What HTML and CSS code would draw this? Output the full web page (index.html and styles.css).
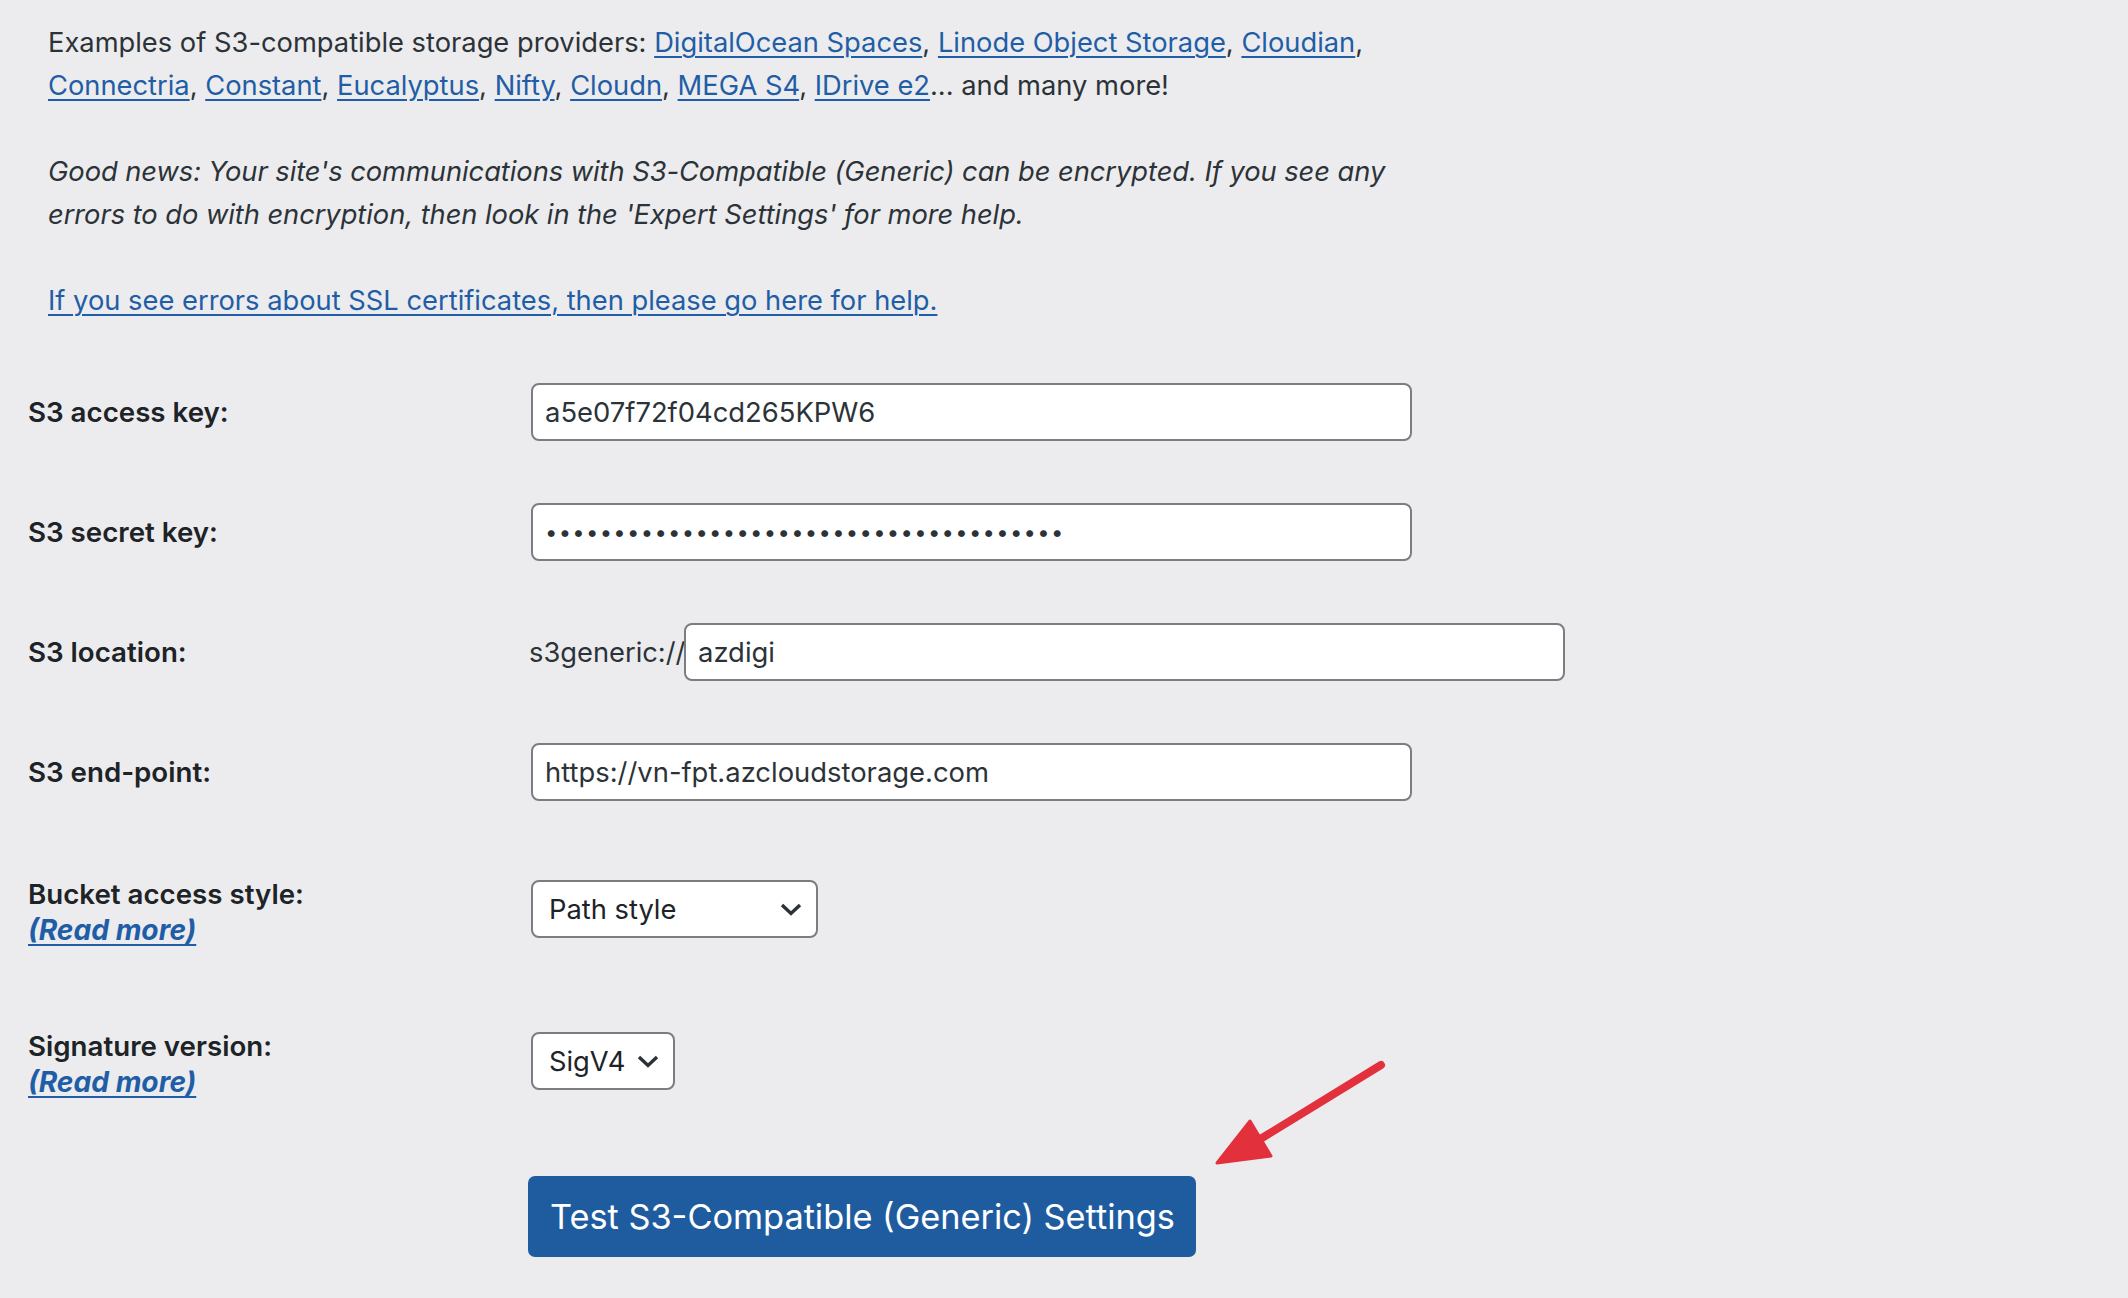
FILE: index.html
```html
<!DOCTYPE html>
<html>
<head>
  <title>S3-Compatible (Generic) settings</title>
  <link rel="stylesheet" href="styles.css">
</head>
<body>
  <div class="intro">
    <p>Examples of S3-compatible storage providers: <a href="#">DigitalOcean Spaces</a>, <a href="#">Linode Object Storage</a>, <a href="#">Cloudian</a>, <a href="#">Connectria</a>, <a href="#">Constant</a>, <a href="#">Eucalyptus</a>, <a href="#">Nifty</a>, <a href="#">Cloudn</a>, <a href="#">MEGA S4</a>, <a href="#">IDrive e2</a>... and many more!</p>
    <p><em>Good news: Your site's communications with S3-Compatible (Generic) can be encrypted. If you see any errors to do with encryption, then look in the 'Expert Settings' for more help.</em></p>
    <p><a href="#">If you see errors about SSL certificates, then please go here for help.</a></p>
  </div>

  <div class="form">
    <div class="row">
      <label class="label">S3 access key:</label>
      <div class="field"><input class="text" type="text" value="a5e07f72f04cd265KPW6"></div>
    </div>
    <div class="row">
      <label class="label">S3 secret key:</label>
      <div class="field"><input class="text secret" type="text" value="••••••••••••••••••••••••••••••••••••••"></div>
    </div>
    <div class="row">
      <label class="label">S3 location:</label>
      <div class="field"><span class="prefix">s3generic://</span><input class="text" type="text" value="azdigi"></div>
    </div>
    <div class="row">
      <label class="label">S3 end-point:</label>
      <div class="field"><input class="text" type="text" value="https://vn-fpt.azcloudstorage.com"></div>
    </div>
    <div class="row tall">
      <div class="label">Bucket access style:<br><a class="more" href="#">(Read more)</a></div>
      <div class="field">
        <div class="select path">
          <span>Path style</span>
          <svg width="22" height="13" viewBox="0 0 22 13"><path d="M2 2 L11 10.5 L20 2" fill="none" stroke="#2c3338" stroke-width="3.4"/></svg>
        </div>
      </div>
    </div>
    <div class="row tall">
      <div class="label">Signature version:<br><a class="more" href="#">(Read more)</a></div>
      <div class="field">
        <div class="select">
          <span>SigV4</span>
          <svg width="22" height="13" viewBox="0 0 22 13"><path d="M2 2 L11 10.5 L20 2" fill="none" stroke="#2c3338" stroke-width="3.4"/></svg>
        </div>
      </div>
    </div>
    <div class="row last">
      <div></div>
      <div class="field"><button class="test-btn">Test S3-Compatible (Generic) Settings</button></div>
    </div>
  </div>

  <svg class="arrow" width="200" height="130" viewBox="0 0 200 130">
    <line x1="181" y1="15" x2="62" y2="88" stroke="#e2303c" stroke-width="8" stroke-linecap="round"/>
    <polygon points="17,113 50,71 71,106" fill="#e2303c" stroke="#e2303c" stroke-width="3" stroke-linejoin="round"/>
  </svg>
</body>
</html>
```

FILE: styles.css
```css
body { margin: 0; background-color: #ececee; font-family: Inter, "Liberation Sans", sans-serif; font-size: 27.3px; color: #2c3338; position: relative; min-height: 1298px; }
a { color: #1f5ea6; text-decoration: underline; text-decoration-thickness: 2px; text-underline-offset: 4px; }

.intro { padding: 21px 0 0 48px; width: 1390px; }
.intro p { margin: 0 0 43px; line-height: 43px; }
.intro p:last-child { margin-bottom: 0; }
.intro em { letter-spacing: -0.05px; }

.form { padding: 30px 0 0 28px; }
.row { display: grid; grid-template-columns: 503px 1fr; align-items: center; height: 120px; }
.row.tall { align-items: start; height: 152px; }
.row.last { align-items: start; }

.label { font-weight: 600; font-size: 27.7px; color: #1d2327; line-height: 36px; }
.tall .label { padding-top: 44px; }
.more { font-style: italic; font-weight: 700; font-size: 28.2px; }

.field { display: flex; align-items: center; }
.text {
  box-sizing: border-box;
  width: 881px;
  height: 58px;
  border: 2px solid #7b7d80;
  border-radius: 8px;
  background: #fff;
  padding: 0 12px;
  font-family: inherit;
  font-size: 27.4px;
  color: #2c3338;
}
.text.secret { letter-spacing: 1.3px; font-size: 22px; }
.prefix { font-size: 27.3px; margin-left: -2px; width: 155px; }

.select {
  box-sizing: border-box;
  margin-top: 48px;
  height: 58px;
  border: 2px solid #7b7d80;
  border-radius: 8px;
  background: #fff;
  display: flex;
  align-items: center;
  justify-content: space-between;
  gap: 12px;
  padding: 0 14px 0 16px;
  font-size: 27.3px;
  color: #1d2327;
}
.select.path { width: 287px; }

.test-btn {
  margin-top: 40px;
  margin-left: -3px;
  height: 81px;
  padding: 0 21px 0 22px;
  background-color: #1f5c9f;
  color: #fff;
  border: none;
  border-radius: 7px;
  font-family: inherit;
  font-size: 34.3px;
  cursor: pointer;
}

.arrow { position: absolute; left: 1200px; top: 1050px; }
```
